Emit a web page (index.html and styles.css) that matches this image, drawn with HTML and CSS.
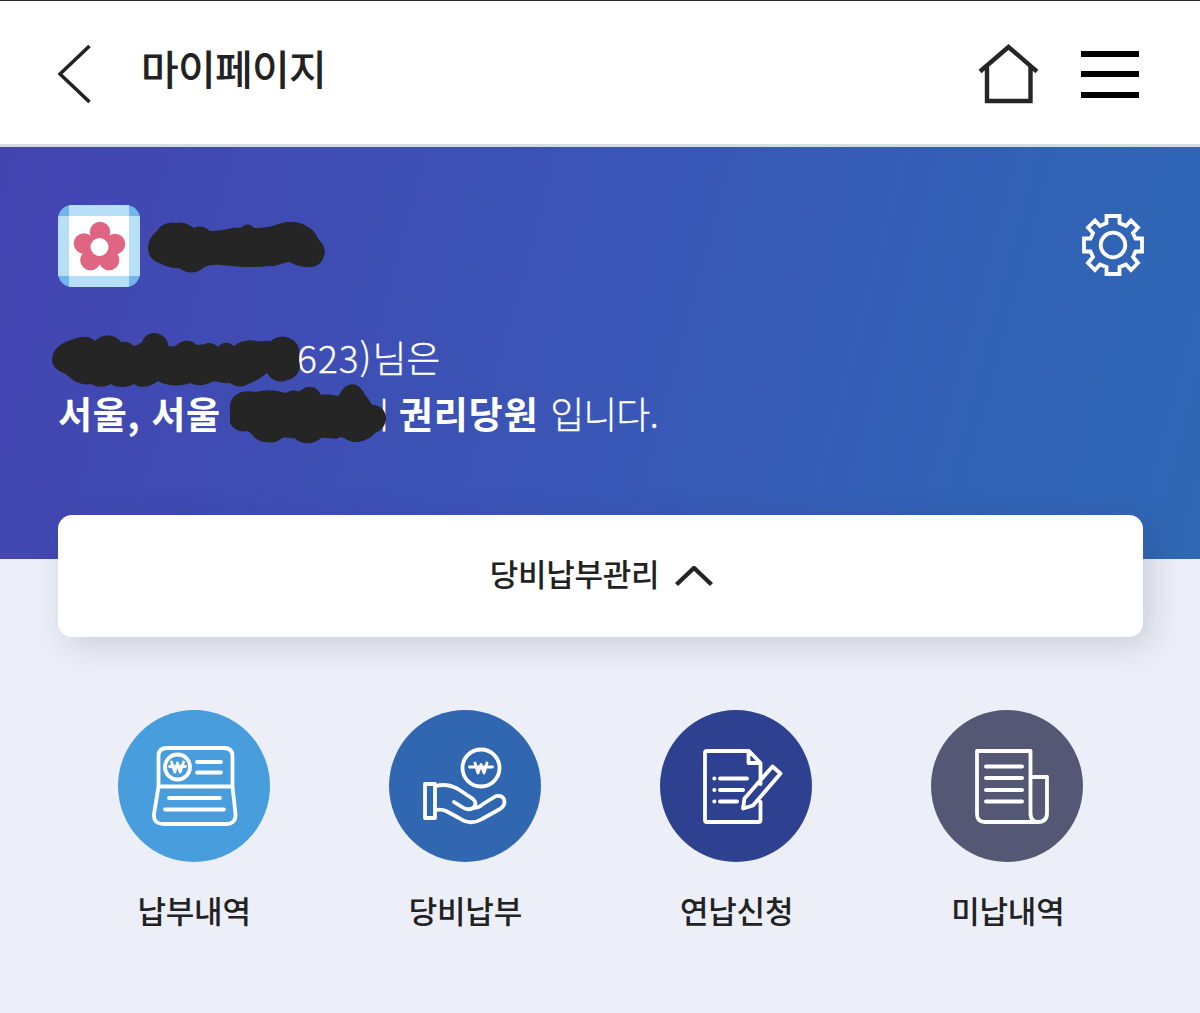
FILE: index.html
```html
<!DOCTYPE html>
<html lang="ko">
<head>
<meta charset="utf-8">
<title>마이페이지</title>
<link rel="stylesheet" href="styles.css">
</head>
<body>
<header class="topbar">
  <svg class="back" width="34" height="60" viewBox="0 0 34 60"><path d="M31.5 2 2 30 31.5 58"/></svg>
  <h1 class="title">마이페이지</h1>
  <svg class="home" width="60" height="60" viewBox="0 0 60 60"><path d="M2 27.500 30.500 3 59 27.500M9 23V57H52.500V23"/></svg>
  <div class="menu"><i></i><i></i><i></i></div>
</header>
<main>
  <section class="hero">
    <div class="profile">
      <svg width="82" height="82" viewBox="0 0 82 82">
        <defs><clipPath id="badge"><rect width="82" height="82" rx="14"/></clipPath></defs>
        <g clip-path="url(#badge)">
          <rect width="82" height="82" fill="#74b4ec"/>
          <path d="M11 0H71V82H11zM0 11H82V71H0z" fill="#b8dff8"/>
          <rect x="11" y="11" width="60" height="60" fill="#fff"/>
        </g>
        <g fill="#e06583"><circle cx="42" cy="27" r="10.300"/><circle cx="57" cy="39" r="10.300"/><circle cx="51" cy="55" r="10.300"/><circle cx="32.500" cy="55" r="10.300"/><circle cx="26" cy="38.500" r="10.300"/><circle cx="41.500" cy="43" r="14"/></g>
        <circle cx="41.500" cy="42" r="9" fill="#fff"/>
      </svg>
      <svg class="gear" width="62" height="62" viewBox="-31 -31 62 62">
        <path d="M-6.500-29H6.500V-22L13-19 18-24.500 25-17.500 20-12 22.500-6.500H29V6.500H22.500L20 12 25 18 18 25 13 19.500 6.500 22V29H-6.500V22L-13 19.500-18 25-25 18-20 12-22.500 6.500H-29V-6.500H-22.500L-20-12-25-17.500-18-24.500-13-19-6.500-22Z"/><circle r="12.300"/>
      </svg>
    </div>
    <p class="line first"><span class="digits">623)</span>님은</p>
    <p class="line"><b class="place">서울, 서울</b><span class="region">ㅣ</span> <b class="grade">권리당원</b> <span class="ending">입니다.</span></p>
    <svg class="ink" width="1200" height="412" viewBox="0 147 1200 412">
      <path d="M148 248C148 240 153 234 157 231C161 224 168 222 175 223C183 221 190 225 194 228C200 225 206 227 210 231C220 231 227 229 232 228C238 227 240 229 243 226C247 223 252 225 254 228C265 228 274 226 282 223C292 220 302 223 308 227C314 230 317 236 319 240C324 244 326 250 324 256C322 264 315 268 307 267C299 267 294 264 289 262C280 263 277 267 269 266C255 268 238 267 221 265C213 264 207 265 203 268C196 274 187 274 179 268C171 269 164 265 159 263C152 261 148 255 148 248Z"/>
      <path d="M52 360C52 350 61 343 68 341C74 339 78 337 84 337C89 336 92 339 95 341C102 333 116 334 121 342C127 341 131 343 134 346C138 345 139 344 142 342C146 331 159 330 166 339C168 342 168 344 168 346C173 347 175 346 177 345C183 339 191 340 197 345C201 345 204 344 208 343C213 343 216 345 218 347C223 341 230 342 234 346C240 341 248 339 257 341C263 342 266 340 271 341C278 334 292 336 297 344C300 349 299 354 299 361C302 370 296 379 287 380C280 384 271 380 267 373C260 379 254 382 248 384C242 388 235 387 230 383C222 384 216 380 211 382C205 386 195 386 190 383C181 387 166 386 158 381C151 387 140 389 134 384C125 389 115 387 111 384C104 388 96 387 91 384C81 386 71 380 66 374C59 372 52 367 52 360Z"/>
      <path d="M230 412C229 404 231 398 236 395C242 390 250 391 256 392C266 389 277 390 286 393C294 388 296 392 300 391C308 383 318 387 321 395C327 394 333 395 338 396C342 391 343 387 349 385C357 382 363 390 365 395C370 400 369 402 373 405C382 405 387 413 386 420C385 426 381 431 375 433C368 441 360 442 354 442C347 441 344 437 340 437C335 441 330 437 321 438C315 444 303 446 294 438C289 439 286 436 282 438C277 444 265 443 258 440C253 437 252 433 247 431C240 433 233 429 230 423Z"/>
    </svg>
  </section>
  <section class="card"><span>당비납부관리</span><svg width="38" height="21" viewBox="0 0 38 21"><path d="M1.500 18.500 19 2 36.500 18.500"/></svg></section>
  <nav class="actions">
    <a class="action"><svg class="disc sky" viewBox="0 0 152 152">
      <path d="M40.500 76.500V46Q40.500 38 49 38H106Q114.500 38 114.500 46V76.500M40.500 76.500H114.500L117.500 104Q118 114 108 114H46Q35 114 36 104L40.500 76.500"/><circle cx="59.500" cy="57" r="12.500"/><path class="won" d="M53.500 52 56.800 62 59.500 53 62.200 62 65.500 52M51.500 56.500H67.500"/><path d="M79 52H103M79 62.500H103M51 88H102M47 99.500H106"/></svg><span>납부내역</span></a>
    <a class="action"><svg class="disc blue" viewBox="0 0 152 152">
      <circle cx="92" cy="58" r="18.500"/><path class="won" d="M86 53 89 63 92 54.500 95 63 98 53M80.500 57H103.500"/><path d="M36 74H46V108H36ZM47 76Q58 73 69 79L84 89Q89 94 84 98Q79 101 73 97L65 92M84 98Q90 98 94 94L107 86Q113 85 115 89Q117 95 111 99L93 109Q82 116 70 108L57 101Q53 99 47 100"/></svg><span>당비납부</span></a>
    <a class="action"><svg class="disc navy" viewBox="0 0 152 152">
      <path d="M100.500 74V53L89 41H47Q45 41 45 43V110Q45 112 47 112H98.500Q100.500 112 100.500 110V92M88.500 42V53H100M112.500 56.500 120.500 63.500 93 95.500 83 98.500 84.500 88.500Z"/><path class="rule" d="M60 68.500H87M60 80H83M60 91.500H77"/><path class="rule" d="M54.300 68.500H54.400M54.300 80H54.400M54.300 91.500H54.400"/></svg><span>연납신청</span></a>
    <a class="action"><svg class="disc slate" viewBox="0 0 152 152">
      <path d="M99.500 105V41H46V104Q46 112 54 112H107Q116 112 116 103V67H100M99.500 103Q99.500 112 107 112"/><path class="rule" d="M55 56.500H91M55 68H91M55 80H91M55 91.500H91"/></svg><span>미납내역</span></a>
  </nav>
</main>
</body>
</html>
```
FILE: styles.css
```css
* { box-sizing: border-box; }
body {
  margin: 0;
  height: 1013px;
  background: #eceff8;
  color: #222;
  font-family: "Noto Sans CJK KR", sans-serif;
  overflow: hidden;
}
svg { display: block; flex: none; fill: none; }
.topbar {
  height: 147px;
  display: flex;
  align-items: center;
  padding: 3px 61px 0 58px;
  background: #fff;
  border-top: 1px solid #29282c;
  border-bottom: 3px solid #d6dbea;
}
.back { stroke: #222; stroke-width: 3.6; }
.title {
  margin: -15px auto 0 49px;
  font-size: 41px;
  line-height: 60px;
  font-weight: 500;
  letter-spacing: -.7px;
}
.home { stroke: #252525; stroke-width: 4.4; margin-right: 43px; }
.menu { width: 58px; display: flex; flex-direction: column; gap: 14.500px; }
.menu i { height: 6px; background: #000; }
.hero {
  position: relative;
  height: 412px;
  padding: 58px 56px 0 58px;
  color: #fff;
  background: linear-gradient(105deg, #4444b1 0%, #3b54b6 45%, #3262b6 80%, #3068b5 100%);
}
.profile { display: flex; justify-content: space-between; align-items: center; margin-bottom: 42px; }
.gear { stroke: #fff; stroke-width: 3.8; margin-top: -2px; }
.line {
  margin: 0;
  height: 56px;
  line-height: 56px;
  font-size: 37px;
  font-weight: 300;
  white-space: nowrap;
  -webkit-text-stroke: .3px #fff;
}
.first { padding-left: 239px; letter-spacing: -.2px; }
.digits { letter-spacing: 1.1px; }
.line b { font-weight: 700; -webkit-text-stroke: 0; }
.place { letter-spacing: .7px; }
.region { margin: 0 -12.500px 0 146px; }
.grade { letter-spacing: 1px; }
.ending { margin-left: 1px; letter-spacing: -1px; }
.ink { position: absolute; left: 0; top: 0; fill: #252525; }
.card {
  position: relative;
  display: flex;
  align-items: center;
  justify-content: center;
  gap: 16px;
  height: 122px;
  padding-left: 2px;
  margin: -44px 57px 0 58px;
  border-radius: 14px;
  background: #fff;
  box-shadow: 8px 8px 32px rgba(40, 40, 60, .17);
  font-size: 31px;
  font-weight: 500;
  letter-spacing: -.3px;
}
.card span { margin-top: -7px; }
.card svg { stroke: #252525; stroke-width: 4.4; }
.actions {
  display: grid;
  grid-template-columns: repeat(4, 1fr);
  margin: 73px 57px 0 58px;
}
.action {
  display: flex;
  flex-direction: column;
  align-items: center;
  gap: 25px;
  font-size: 31px;
  line-height: 46px;
  font-weight: 500;
  letter-spacing: -.2px;
}
.action span { padding-left: 1px; }
.disc {
  width: 152px;
  height: 152px;
  border-radius: 50%;
  stroke: #fff;
  stroke-width: 3.8;
  stroke-linecap: round;
  stroke-linejoin: round;
}
.won { stroke-width: 2.8; }
.rule { stroke-width: 4; }
.sky { background: #489ddc; }
.blue { background: #3067b0; }
.navy { background: #2e4090; }
.slate { background: #555874; }
```
